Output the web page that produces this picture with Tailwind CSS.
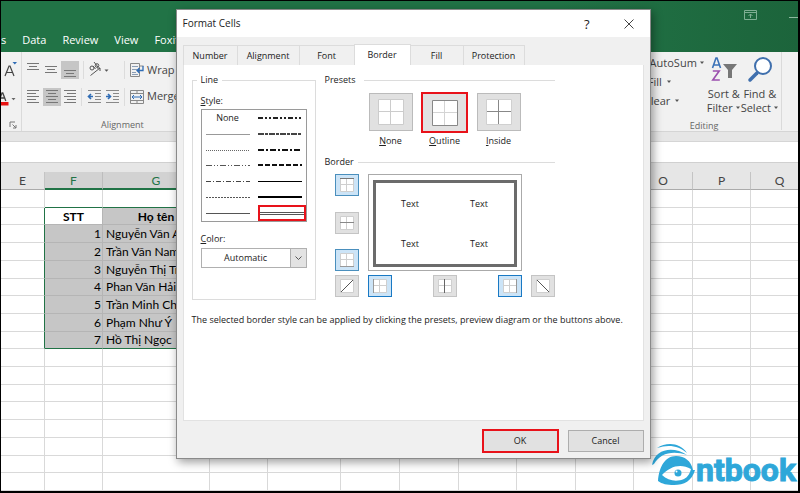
<!DOCTYPE html>
<html lang="vi">
<head>
    <meta charset="UTF-8">
    <meta name="viewport" content="width=device-width, initial-scale=1.0">
    <title>Format Cells</title>
    <script src="https://cdn.jsdelivr.net/npm/@tailwindcss/browser@4"></script>
</head>
<body class="relative flex flex-col h-screen min-h-[493px] overflow-hidden border border-b-2 border-r-2 border-black bg-white font-['Open_Sans','Noto_Sans',sans-serif] text-[9px] text-[#333]">

<!-- Title bar + ribbon tabs -->
<header class="relative h-[51px] shrink-0 bg-[#217346] bg-linear-to-r from-[#217346] from-70% to-[#1c643b] overflow-hidden">
    <div class="flex justify-end items-center gap-8 h-[27px]">
        <svg class="w-[13px] h-[10px]" viewBox="0 0 13 10" fill="none" stroke="#7fae93"><path d="M.5.5h12v9H.5zM.5 2.5h12M6.5 8V4M4.500 6l2-2 2 2"/></svg>
        <svg class="w-[9px] h-[10px]" viewBox="0 0 9 10" fill="none" stroke="#8db89f"><path d="M0 7.500h9"/></svg>
    </div>
    <nav class="flex items-center gap-4 h-6 text-[11px] text-white whitespace-nowrap">
        <a href="#">s</a>
        <a href="#">Data</a>
        <a href="#">Review</a>
        <a href="#">View</a>
        <a href="#">Foxit PDF</a>
    </nav>
</header>

<!-- Ribbon -->
<section class="flex justify-between h-[80px] shrink-0 bg-[#f1f1f1] border-b border-[#d5d5d5] text-[#444]">
    <div class="flex">
        <!-- Font group, right end -->
        <div class="flex flex-col w-[21px] border-r border-[#dadada]">
            <button class="h-8 pt-1 pl-0.5" aria-label="Decrease font size">
                <svg class="w-4 h-5" viewBox="0 0 16 20"><path d="M2 16 6 6h1l4 10M3.500 12.500h6" fill="none" stroke="#444" stroke-width="1.200"/><path d="M9.500 2h4.500l-2.200 2.500z" fill="#2f6cb5"/></svg>
            </button>
            <button class="h-7" aria-label="Font color">
                <svg class="w-4 h-5" viewBox="0 0 16 20"><path d="M-2 13 1 5h.8l3 8M-1 10h5" fill="none" stroke="#444" stroke-width="1.300"/><path d="M-1 14h8.500v3.500H-1z" fill="#e81313"/><path d="M10.500 10h4l-2 2.200z" fill="#666"/></svg>
            </button>
            <button class="mt-auto pl-2 pb-0.5" aria-label="Font settings">
                <svg class="w-2 h-2" viewBox="0 0 8 8" fill="none" stroke="#777"><path d="M1 6V1h5M3.500 3.500l3.500 3.500M7 4v3H4"/></svg>
            </button>
        </div>
        <!-- Alignment group -->
        <div class="flex flex-col pl-[3px]">
            <div class="flex items-center h-[37px]">
                <button aria-label="Top align"><svg class="w-[18px] h-[18px]" viewBox="0 0 18 18" stroke="#777"><path d="M2 2.500h12M4 5.500h8M2 8.500h12"/></svg></button>
                <button aria-label="Middle align"><svg class="w-[18px] h-[18px]" viewBox="0 0 18 18" stroke="#777"><path d="M2 5.500h12M4 8.500h8M2 11.500h12"/></svg></button>
                <button aria-label="Bottom align" class="bg-[#c6c6c6]"><svg class="w-[18px] h-[18px]" viewBox="0 0 18 18" stroke="#777"><path d="M3 9.500h12M5 12.500h8M3 15.500h12"/></svg></button>
                <span class="w-px h-[18px] mx-1 bg-[#dcdcdc]"></span>
                <button aria-label="Orientation">
                    <svg class="w-6 h-[18px]" viewBox="0 0 24 18" fill="none" stroke="#555"><circle cx="4" cy="7" r="2"/><path d="M5 5l2.500 3M6 1l4 5M2.500 14.500 12 7M9 7h3v3"/><circle cx="9" cy="4.500" r="1.800"/><path d="M16.500 8.500h4l-2 2.300z" fill="#555" stroke="none"/></svg>
                </button>
                <span class="w-px h-[18px] ml-3 mr-1 bg-[#dcdcdc]"></span>
                <button class="flex items-center gap-0.5 text-[11px] whitespace-nowrap">
                    <svg class="w-4 h-4" viewBox="0 0 16 16" fill="none"><path d="M1.500 1.500h9v13h-9zM10.500 4h4" stroke="#888"/><path d="M3 4.500h6M3 7.500h5M3 10.500h4M3 12.500h6" stroke="#8a9db5"/><path d="M14 4v4.500H8M10.500 6 8 8.500 10.500 11" stroke="#2f6cb5" stroke-width="1.300"/></svg>
                    Wrap Text
                </button>
            </div>
            <div class="flex items-center h-[18px]">
                <button aria-label="Align left"><svg class="w-[18px] h-[18px]" viewBox="0 0 18 18" stroke="#777"><path d="M2 2.500h12M2 5.500h9M2 8.500h12M2 11.500h9M2 14.500h12"/></svg></button>
                <button aria-label="Center" class="bg-[#c6c6c6]"><svg class="w-[18px] h-[18px]" viewBox="0 0 18 18" stroke="#777"><path d="M3 2.500h12M5 5.500h8M3 8.500h12M5 11.500h8M3 14.500h12"/></svg></button>
                <button aria-label="Align right"><svg class="w-[18px] h-[18px]" viewBox="0 0 18 18" stroke="#777"><path d="M3 2.500h12M6 5.500h9M3 8.500h12M6 11.500h9M3 14.500h12"/></svg></button>
                <span class="w-px h-[18px] ml-0.5 mr-1 bg-[#dcdcdc]"></span>
                <button aria-label="Decrease indent"><svg class="w-[18px] h-[18px]" viewBox="0 0 18 18" fill="none" stroke="#888"><path d="M2 2.500h13M9 5.500h6M9 8.500h6M9 11.500h6M2 14.500h13"/><path d="M7 8.500H2.500M5 6 2.500 8.500 5 11" stroke="#2f6cb5" stroke-width="1.600"/></svg></button>
                <button aria-label="Increase indent"><svg class="w-[18px] h-[18px]" viewBox="0 0 18 18" fill="none" stroke="#888"><path d="M2 2.500h13M9 5.500h6M9 8.500h6M9 11.500h6M2 14.500h13"/><path d="M2 8.500h4.500M4 6l2.500 2.500L4 11" stroke="#2f6cb5" stroke-width="1.600"/></svg></button>
                <span class="w-px h-[18px] ml-0.5 mr-1 bg-[#dcdcdc]"></span>
                <button class="flex items-center gap-0.5 text-[11px] whitespace-nowrap">
                    <svg class="w-4 h-4" viewBox="0 0 16 16" fill="none"><path d="M1.500 1.500h13v13h-13zM1.500 4.500h13M1.500 11.500h13M8 1.500v3M8 11.500v3" stroke="#888"/><path d="M3 8h10M5 6 3 8l2 2M11 6l2 2-2 2" stroke="#2f6cb5"/></svg>
                    Merge
                </button>
            </div>
            <div class="pl-[76px] pt-3 text-[#666]">Alignment</div>
        </div>
    </div>

    <!-- Editing group -->
    <div class="flex flex-col pr-4">
        <div class="flex h-[78px] border-r border-[#dadada] pr-0.5">
            <div class="flex flex-col gap-1 pt-[3px] pr-0.5 text-[11px] leading-[15px]">
                <button class="flex items-center gap-0.5 text-left">∑ AutoSum <svg class="w-1.5 h-1" viewBox="0 0 6 4"><path d="M1 .5h4L3 3z" fill="#555"/></svg></button>
                <button class="flex items-center gap-1 pl-2 text-left">Fill <svg class="w-1.5 h-1" viewBox="0 0 6 4"><path d="M1 .5h4L3 3z" fill="#555"/></svg></button>
                <button class="flex items-center gap-1 pl-1 text-left">Clear <svg class="w-1.5 h-1" viewBox="0 0 6 4"><path d="M1 .5h4L3 3z" fill="#555"/></svg></button>
                <span class="pl-[50px] -mr-4 pt-2 text-[9px] leading-3 text-[#666]">Editing</span>
            </div>
            <button class="flex flex-col items-center self-start text-[11px] leading-[14px] pt-1">
                <svg class="w-[26px] h-[27px] mb-1" viewBox="0 0 26 27" fill="none"><path d="M1.500 12 5 2h1l3.500 10M2.700 9h5.700" stroke="#3c73b8" stroke-width="1.600"/><path d="M1.800 15h6.400l-6.400 9h7" stroke="#9b4fae" stroke-width="1.600"/><path d="M12 8h14l-5 6v8h-4v-8z" fill="#777"/></svg>
                <span>Sort &amp;</span>
                <span class="flex items-center gap-0.5">Filter <svg class="w-1.5 h-1" viewBox="0 0 6 4"><path d="M1 .5h4L3 3z" fill="#555"/></svg></span>
            </button>
            <button class="flex flex-col items-center self-start text-[11px] leading-[14px] pt-1">
                <svg class="w-[26px] h-[27px] mb-1" viewBox="0 0 26 27" fill="none" stroke="#3f6fad"><circle cx="16" cy="10" r="8" fill="#fff" stroke-width="2"/><path d="M10 17l-7 7" stroke-width="3.500" stroke-linecap="round"/></svg>
                <span>Find &amp;</span>
                <span class="flex items-center gap-0.5">Select <svg class="w-1.5 h-1" viewBox="0 0 6 4"><path d="M1 .5h4L3 3z" fill="#555"/></svg></span>
            </button>
        </div>
    </div>
</section>

<!-- Formula bar -->
<div class="h-[10px] shrink-0 bg-[#e6e6e6] border-b border-[#d5d5d5]"></div>
<div class="h-5 shrink-0 bg-white"></div>
<div class="h-[10px] shrink-0 bg-[#e6e6e6] border-t border-[#d0d0d0]"></div>

<!-- Sheet -->
<div class="flex-1 min-h-0 overflow-hidden">
    <table class="w-[calc(100%+11px)] h-full table-fixed border-separate border-spacing-0 font-['Lato','Noto_Sans',sans-serif] text-[12px] leading-[15px] text-black">
        <colgroup>
            <col class="w-[44px]"><col class="w-[58px]"><col class="w-[107px]"><col class="w-[58px]"><col class="w-[73px]">
            <col class="w-[59px]"><col class="w-[59px]"><col class="w-[58px]"><col class="w-[59px]"><col class="w-[58px]"><col class="w-[59px]"><col class="w-[58px]"><col>
        </colgroup>
        <thead id="sheetHead"></thead>
        <tbody id="sheetBody"></tbody>
    </table>
</div>

<!-- Logo -->
<div class="absolute right-[2px] bottom-0 flex items-end text-[#2ea7d9]">
    <svg class="w-[44px] h-[44px] mb-1" viewBox="0 0 44 44" fill="currentColor">
        <path d="M5 5C14-1 28-1 35 10 27 3 17 1 5 5z"/>
        <path d="M0 22C3 5 22 3 35 12 21 7 8 10 2 21z"/>
        <path d="M6 38C7 24 13 13 24 13c9 0 15 5 17 14l2 0C40 38 32 42 22 42 15 42 10 41 6 38zM10 32c6 6 15 7 22 4 4-2 6-6 7-10C29 20 18 23 10 32z" fill-rule="evenodd"/>
        <circle cx="26" cy="30" r="3.500"/>
        <circle cx="24.500" cy="28.500" r="1" fill="#fff"/>
    </svg>
    <span class="font-['Roboto',sans-serif] text-[32px] leading-[42px] font-bold [-webkit-text-stroke:1px]">ntbook</span>
</div>

<!-- Format Cells dialog -->
<div role="dialog" aria-labelledby="dialogTitle" class="absolute top-2 left-[21.9%] w-[475px] h-[450px] flex flex-col bg-[#f0f0f0] border border-[#8a8a8a] shadow-[2px_3px_9px_rgba(0,0,0,0.4)] text-[#222]">
    <div class="flex items-center justify-between h-[27px] shrink-0 bg-white pl-1.5 pr-4">
        <h1 id="dialogTitle" class="text-[10px]">Format Cells</h1>
        <div class="flex items-center gap-[34px]">
            <button class="text-[13px] leading-4" aria-label="Help">?</button>
            <button aria-label="Close"><svg class="w-[10px] h-[10px]" viewBox="0 0 10 10" stroke="#444"><path d="M.5.5l9 9M9.500.5l-9 9"/></svg></button>
        </div>
    </div>

    <!-- Tabs -->
    <div role="tablist" class="flex items-end h-7 shrink-0 pl-1.5">
        <button role="tab" class="w-[55px] h-5 border border-b-0 border-[#dcdcdc]">Number</button>
        <button role="tab" class="w-[62px] h-5 border border-b-0 border-l-0 border-[#dcdcdc]">Alignment</button>
        <button role="tab" class="w-[54px] h-5 border-t border-[#dcdcdc]">Font</button>
        <button role="tab" aria-selected="true" class="w-[57px] h-[21px] bg-white border border-b-0 border-[#dcdcdc]">Border</button>
        <button role="tab" class="w-[53px] h-5 border-t border-r border-[#dcdcdc]">Fill</button>
        <button role="tab" class="w-[61px] h-5 border-t border-r border-[#dcdcdc]">Protection</button>
    </div>

    <!-- Border panel -->
    <div class="flex-1 mx-1.5 pl-2 pt-2 bg-white border border-[#e2e2e2] border-t-0">
        <div class="flex gap-[9px]">
            <!-- Line -->
            <fieldset class="w-[124px] h-[227px] px-2 border border-[#dcdcdc]">
                <legend class="-ml-1 px-1 leading-[14px]">Line</legend>
                <div id="styleLabel" class="pt-1.5 leading-4"><u>S</u>tyle:</div>
                <div id="lineStyles" role="listbox" aria-labelledby="styleLabel" class="grid grid-flow-col grid-rows-7 grid-cols-2 h-[113px] border border-[#9a9a9a]"></div>
                <label for="color" class="block pt-2 leading-[18px]"><u>C</u>olor:</label>
                <div class="relative">
                    <select id="color" class="block w-full h-5 appearance-none pr-4 text-center bg-white border border-[#b0b0b0]">
                        <option>Automatic</option>
                    </select>
                    <span class="absolute inset-y-0 right-0 w-[17px] flex items-center justify-center bg-[#e3e3e3] border border-[#b0b0b0] pointer-events-none">
                        <svg class="w-[7px] h-1" viewBox="0 0 7 4" fill="none" stroke="#555"><path d="M.5.5l3 3 3-3"/></svg>
                    </span>
                </div>
            </fieldset>

            <div class="w-[230px]">
                <!-- Presets -->
                <div class="flex items-center gap-2 leading-[14px]">Presets<span class="flex-1 h-px bg-[#dcdcdc]"></span></div>
                <div class="flex gap-[10px] pl-11 pt-[5px]">
                    <div class="flex flex-col items-center w-11">
                        <button id="none" class="w-11 h-[38px] mt-px flex items-center justify-center bg-[#e1e1e1] border border-[#bbb]">
                            <svg class="w-[26px] h-[26px]" viewBox="0 0 26 26" fill="#fff" stroke="#ccc"><path d="M.5.500h25v25H.5zM12.500 .5v25M.5 12.500h25"/></svg>
                        </button>
                        <label for="none" class="pt-[3px] leading-[14px]"><u>N</u>one</label>
                    </div>
                    <div class="flex flex-col items-center w-11">
                        <button id="outline" class="w-[47px] h-[41px] -mb-0.5 flex items-center justify-center bg-[#e1e1e1] border-2 border-[#e8121a]">
                            <svg class="w-[26px] h-[26px]" viewBox="0 0 26 26" fill="#fff" stroke="#d4d4d4"><path d="M.5.500h25v25H.5z" stroke="#888"/><path d="M12.500 1v24M1 12.500h24"/></svg>
                        </button>
                        <label for="outline" class="pt-[3px] leading-[14px]"><u>O</u>utline</label>
                    </div>
                    <div class="flex flex-col items-center w-11">
                        <button id="inside" class="w-11 h-[38px] mt-px flex items-center justify-center bg-[#e1e1e1] border border-[#bbb]">
                            <svg class="w-[26px] h-[26px]" viewBox="0 0 26 26" fill="#fff" stroke="#d0d0d0"><path d="M.5.500h25v25H.5z"/><path d="M12.500 1v24M1 12.500h24" stroke="#888"/></svg>
                        </button>
                        <label for="inside" class="pt-[3px] leading-[14px]"><u>I</u>nside</label>
                    </div>
                </div>

                <!-- Border -->
                <div class="flex items-center gap-1 pt-[7px] leading-[14px]">Border<span class="flex-1 h-px bg-[#dcdcdc]"></span></div>
                <div class="grid grid-cols-[24px_154px_24px] gap-x-[9px] gap-y-1 pl-[10px] pt-[5px]">
                    <div class="flex flex-col justify-between">
                        <button aria-label="Top border" class="w-6 h-[22px] flex items-center justify-center bg-[#cce4f7] border border-[#4a8fbd]">
                            <svg class="w-[14px] h-[14px]" viewBox="0 0 14 14" fill="#fff" stroke="#cfcfcf"><path d="M.5.500h13v13H.5zM6.500 .5v13M.5 6.500h13"/><path d="M0 .5h14" stroke="#777"/></svg>
                        </button>
                        <button aria-label="Horizontal border" class="w-6 h-[22px] flex items-center justify-center bg-[#e1e1e1] border border-[#c4c4c4]">
                            <svg class="w-[14px] h-[14px]" viewBox="0 0 14 14" fill="#fff" stroke="#cfcfcf"><path d="M.5.500h13v13H.5zM6.500 .5v13"/><path d="M0 6.500h14" stroke="#888"/></svg>
                        </button>
                        <button aria-label="Bottom border" class="w-6 h-[22px] flex items-center justify-center bg-[#cce4f7] border border-[#4a8fbd]">
                            <svg class="w-[14px] h-[14px]" viewBox="0 0 14 14" fill="#fff" stroke="#cfcfcf"><path d="M.5.500h13v13H.5zM6.500 .5v13M.5 6.500h13"/><path d="M0 13.500h14" stroke="#999"/></svg>
                        </button>
                    </div>
                    <div class="h-[97px] px-1 pt-[5px] pb-[3px] border border-[#aaa]">
                        <div class="grid grid-cols-2 grid-rows-2 items-center text-center h-full border-3 border-[#6b6b6b]">
                            <span>Text</span><span>Text</span><span>Text</span><span>Text</span>
                        </div>
                    </div>
                    <span></span>
                    <button aria-label="Diagonal up" class="w-6 h-[22px] flex items-center justify-center bg-[#e1e1e1] border border-[#c4c4c4]">
                        <svg class="w-[14px] h-[14px]" viewBox="0 0 14 14" fill="#fff" stroke="#cfcfcf"><path d="M.5.500h13v13H.5z"/><path d="M1 13 13 1" stroke="#555"/></svg>
                    </button>
                    <div class="flex justify-between">
                        <button aria-label="Left border" class="w-6 h-[22px] flex items-center justify-center bg-[#cce4f7] border border-[#1979c4]">
                            <svg class="w-[14px] h-[14px]" viewBox="0 0 14 14" fill="#fff" stroke="#cfcfcf"><path d="M.5.500h13v13H.5zM6.500 .5v13M.5 6.500h13"/><path d="M.5 0v14" stroke="#999"/></svg>
                        </button>
                        <button aria-label="Vertical border" class="w-6 h-[22px] flex items-center justify-center bg-[#e1e1e1] border border-[#c4c4c4]">
                            <svg class="w-[14px] h-[14px]" viewBox="0 0 14 14" fill="#fff" stroke="#cfcfcf"><path d="M.5.500h13v13H.5zM.5 6.500h13"/><path d="M6.500 0v14" stroke="#666"/></svg>
                        </button>
                        <button aria-label="Right border" class="w-6 h-[22px] flex items-center justify-center bg-[#cce4f7] border border-[#1979c4]">
                            <svg class="w-[14px] h-[14px]" viewBox="0 0 14 14" fill="#fff" stroke="#cfcfcf"><path d="M.5.500h13v13H.5zM6.500 .5v13M.5 6.500h13"/><path d="M13.500 0v14" stroke="#999"/></svg>
                        </button>
                    </div>
                    <button aria-label="Diagonal down" class="w-6 h-[22px] flex items-center justify-center bg-[#e1e1e1] border border-[#c4c4c4]">
                        <svg class="w-[14px] h-[14px]" viewBox="0 0 14 14" fill="#fff" stroke="#cfcfcf"><path d="M.5.500h13v13H.5z"/><path d="M1 1l12 12" stroke="#555"/></svg>
                    </button>
                </div>
            </div>
        </div>
        <p class="pt-3 leading-4 whitespace-nowrap">The selected border style can be applied by clicking the presets, preview diagram or the buttons above.</p>
    </div>

    <!-- Footer -->
    <div class="flex items-center justify-end gap-[9px] h-[37px] shrink-0 pr-1.5 pt-0.5">
        <button class="w-[77px] h-6 bg-[#e1e1e1] border-2 border-[#e8121a]">OK</button>
        <button class="w-[76px] h-[22px] bg-[#e1e1e1] border border-[#adadad]">Cancel</button>
    </div>
</div>

<script>
    // Column headers
    const columns = ['E', 'F', 'G', 'H', 'I', 'J', 'K', 'L', 'M', 'N', 'O', 'P', 'Q'];
    const selected = ['F', 'G', 'H', 'I', 'J'];

    document.getElementById('sheetHead').innerHTML = `<tr class="h-[18px]">${columns.map(c => `
        <th class="p-0 font-normal border-r border-b ${
            selected.includes(c) ? 'bg-[#d2d2d2] text-[#217346] border-r-[#bdbdbd] border-b-2 border-b-[#217346]' : 'bg-[#e6e6e6] text-[#444] border-r-[#c4c4c4] border-b-[#ababab]'
        }">${c}</th>`).join('')}</tr>`;

    // Cell data
    const rows = [
        ['STT', 'Họ tên'],
        [1, 'Nguyễn Văn An'],
        [2, 'Trần Văn Nam'],
        [3, 'Nguyễn Thị Trang'],
        [4, 'Phan Văn Hải'],
        [5, 'Trần Minh Chi'],
        [6, 'Phạm Như Ý'],
        [7, 'Hồ Thị Ngọc']
    ];

    function cell(col, r) {
        const data = rows[r - 1];
        if (!data || !selected.includes(col)) {
            const right = col === 'E' && data ? 'border-r-[#217346]' : 'border-r-[#d9d9d9]';
            const bottom = r === 0 && selected.includes(col) ? 'border-b-[#217346]' : 'border-b-[#d9d9d9]';
            return `<td class="p-0 border-r border-b ${right} ${bottom}">&nbsp;</td>`;
        }
        const text = col === 'F' ? data[0] : col === 'G' ? data[1] : '&nbsp;';
        const align = r === 1 ? 'text-center font-bold' : col === 'F' ? 'text-right pr-px' : 'pl-[3px]';
        const fill = r === 1 && col === 'F' ? 'bg-white' : 'bg-[#c6c6c6]';
        const bottom = r === rows.length ? 'border-b-[#217346]' : 'border-b-[#b5b5b5]';
        return `<td class="p-0 border-r border-b border-r-[#b5b5b5] whitespace-nowrap overflow-hidden ${align} ${fill} ${bottom}">${text}</td>`;
    }

    let body = '';
    for (let r = 0; r < 17; r++) {
        body += `<tr>${columns.map(c => cell(c, r)).join('')}</tr>`;
    }
    document.getElementById('sheetBody').innerHTML = body;

    // Line styles: dash pattern, stroke width, colour
    const styles = [
        ['', 1, '#999'],
        ['1 1', 1, '#666'],
        ['6 2 1 2 1 2', 1, '#555'],
        ['5 2 1 2', 1, '#444'],
        ['2 1', 1, '#555'],
        ['', 1, '#555'],
        ['5 2 2 2 2 2', 2, '#222'],
        ['6 1 3 1', 2, '#444'],
        ['6 2 2 2', 2, '#111'],
        ['5 2', 2, '#111'],
        ['', 1, '#000'],
        ['', 2, '#000']
    ];

    // "None" comes first, the picked double line comes last
    document.getElementById('lineStyles').innerHTML =
        '<button role="option" class="leading-4">None</button>' +
        styles.map(([dash, width, color]) => `
            <button role="option" class="flex items-center justify-center">
                <svg class="w-11 h-3" viewBox="0 0 44 12"><path d="M0 ${width === 2 ? 6 : 6.5}h44" stroke="${color}" stroke-width="${width}" stroke-dasharray="${dash}"/></svg>
            </button>`).join('') +
        `<button role="option" aria-selected="true" class="flex items-center justify-center ml-1 border-2 border-[#e8121a]">
            <svg class="w-11 h-3" viewBox="0 0 44 12"><path d="M0 5.500h44M0 7.500h44" stroke="#555"/></svg>
        </button>`;
</script>
</body>
</html>
